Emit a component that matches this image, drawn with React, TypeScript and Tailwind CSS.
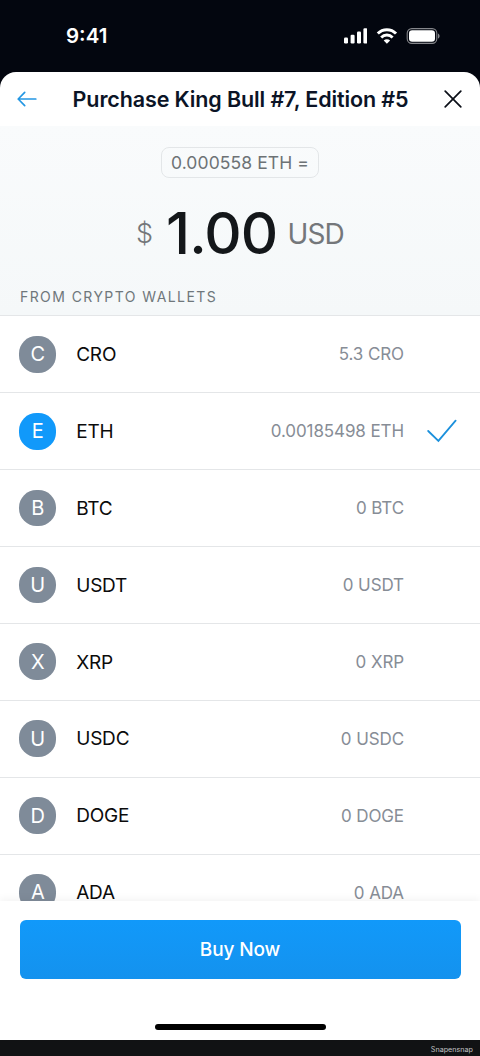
import React, { useState } from 'react';
import clsx from 'clsx';

interface Wallet {
  symbol: string;
  balance: string;
}

const wallets: Wallet[] = [
  { symbol: 'CRO', balance: '5.3' },
  { symbol: 'ETH', balance: '0.00185498' },
  { symbol: 'BTC', balance: '0' },
  { symbol: 'USDT', balance: '0' },
  { symbol: 'XRP', balance: '0' },
  { symbol: 'USDC', balance: '0' },
  { symbol: 'DOGE', balance: '0' },
  { symbol: 'ADA', balance: '0' },
];

const StatusBar: React.FC = () => (
  <div className="flex h-[72px] shrink-0 items-center justify-between pr-10 pl-[66px] text-white">
    <span className="text-[20.5px] font-semibold">9:41</span>
    <div className="flex items-center gap-[9px]">
      {/* Signal */}
      <svg width="24" height="16" viewBox="0 0 24 16" fill="currentColor">
        <rect x="1" y="9.5" width="4" height="6" rx="1.2" />
        <rect x="7.6" y="6.8" width="4" height="8.7" rx="1.2" />
        <rect x="14" y="3.4" width="4" height="12.1" rx="1.2" />
        <rect x="20.4" y="0.2" width="4" height="15.3" rx="1.2" />
      </svg>
      {/* Wifi */}
      <svg width="21" height="16" viewBox="0 0 21 16" fill="none" stroke="currentColor" strokeWidth="2.9">
        <path d="M1.8 5.6a12.6 12.6 0 0 1 18.2 0" />
        <path d="M5.2 9.4a8 8 0 0 1 11.4 0" />
        <path d="M10.9 15.8 7.7 12.6a4.6 4.6 0 0 1 6.4 0z" fill="currentColor" stroke="none" />
      </svg>
      {/* Battery */}
      <svg width="34" height="16" viewBox="0 0 34 16" fill="none">
        <rect x="1.2" y="0.6" width="29.6" height="14.8" rx="4.6" stroke="#85868b" strokeWidth="1.1" />
        <rect x="3" y="2.3" width="26" height="11.4" rx="3.2" fill="#fff" />
        <path d="M32 5.4v5.2c1-.4 1.6-1.4 1.6-2.6s-.6-2.2-1.6-2.6z" fill="#85868b" />
      </svg>
    </div>
  </div>
);

const Header: React.FC = () => (
  <header className="flex h-[54px] shrink-0 items-center justify-between pr-[18px] pl-[17px]">
    <button aria-label="Back" className="cursor-pointer">
      <svg width="20" height="16" viewBox="0 0 20 16" fill="none" stroke="#2497e3" strokeWidth="1.7" strokeLinecap="round" strokeLinejoin="round">
        <path d="M7.7 1.4 1.2 8l6.5 6.6M1.2 8h17.6" />
      </svg>
    </button>
    <h1 className="pt-[2px] text-[21.5px] leading-none font-semibold tracking-[-0.12px] whitespace-nowrap text-[#0b1426]">
      Purchase King Bull #7, Edition #5
    </h1>
    <button aria-label="Close" className="cursor-pointer">
      <svg width="18" height="18" viewBox="0 0 18 18" fill="none" stroke="#0b0f18" strokeWidth="1.7" strokeLinecap="round">
        <path d="m1.2 1.2 15.6 15.6M16.8 1.2 1.2 16.8" />
      </svg>
    </button>
  </header>
);

const Amount: React.FC = () => (
  <section className="flex h-[189.3px] shrink-0 flex-col items-center bg-linear-to-b from-[#f9fbfc] to-[#f5f8f9] pt-[21px]">
    <div className="flex h-[31px] w-[158px] items-center justify-center rounded-[8px] border border-[#e3e6e8] pt-px text-[17.5px] tracking-[0.1px] whitespace-nowrap text-[#6d7275]">
      0.000558 ETH =
    </div>
    <div className="mt-[25px] flex h-[60px] w-[208px] items-center justify-between leading-none text-[#74777a]">
      <span className="text-[27px] font-light">$</span>
      <span className="ml-[3px] text-[58px] font-medium tracking-[-0.9px] text-[#14171a]">1.00</span>
      <span className="pt-[2px] text-[28px] tracking-[-0.8px]">USD</span>
    </div>
    <h2 className="mt-[24px] w-full pl-5 text-[14px] leading-[20px] tracking-[1.42px] text-[#6f777b]">
      FROM CRYPTO WALLETS
    </h2>
  </section>
);

interface WalletRowProps {
  wallet: Wallet;
  isSelected: boolean;
  onSelect: () => void;
}

const WalletRow: React.FC<WalletRowProps> = ({ wallet, isSelected, onSelect }) => (
  <li
    onClick={onSelect}
    className="flex h-[76.9px] shrink-0 cursor-pointer items-center border-t border-[#e4e6e8] pl-[19.4px]"
  >
    <span
      className={clsx(
        'flex size-[36.8px] items-center justify-center rounded-[17.5px] text-[20px] text-white',
        isSelected ? 'bg-[#1199fa]' : 'bg-[#7f8b99]'
      )}
    >
      {wallet.symbol[0]}
    </span>
    <span className="ml-5 pt-[2px] text-[19px] tracking-[-0.2px] text-[#0b0b0b]">{wallet.symbol}</span>
    <span className="ml-auto pt-[2px] text-[17px] tracking-[-0.1px] text-[#878d96]">
      {wallet.balance} {wallet.symbol}
    </span>
    <span className="flex w-[76px] justify-center">
      {isSelected && (
        <svg width="30" height="24" viewBox="0 0 30 24" fill="none" stroke="#1b90dc" strokeWidth="1.8" strokeLinecap="round">
          <path d="M1.2 12 11.4 21.9 28.6 1.6" />
        </svg>
      )}
    </span>
  </li>
);

export default function App() {
  const [selected, setSelected] = useState('ETH');

  return (
    <div className="flex h-[1056px] w-[480px] flex-col overflow-hidden bg-[#03060f] font-['Inter','Liberation_Sans',sans-serif]">
      <StatusBar />

      <main className="flex min-h-0 flex-1 flex-col overflow-hidden rounded-t-[16px] bg-white">
        <Header />
        <Amount />

        {/* Wallet list, runs under the footer */}
        <ul className="flex min-h-0 flex-1 flex-col overflow-hidden">
          {wallets.map((wallet) => (
            <WalletRow
              key={wallet.symbol}
              wallet={wallet}
              isSelected={wallet.symbol === selected}
              onSelect={() => setSelected(wallet.symbol)}
            />
          ))}
        </ul>

        <footer className="relative flex h-[139px] shrink-0 flex-col items-center bg-white px-[19.5px] pt-[19px] shadow-[0_-2px_8px_rgba(0,0,0,0.05)]">
          <button className="h-[59px] w-full cursor-pointer rounded-[6px] bg-linear-to-b from-[#1199fa] to-[#1492ee] pt-[2px] text-[19px] font-medium tracking-[-0.1px] text-white">
            Buy Now
          </button>
          <div className="mt-[45px] h-[6px] w-[171px] rounded-full bg-black" />
        </footer>
      </main>

      <div className="flex h-4 shrink-0 items-center justify-end bg-[#111214] pt-[3px] pr-[7px] text-[7.2px] leading-none text-[#c3c4c6]">
        Snapensnap
      </div>
    </div>
  );
}
